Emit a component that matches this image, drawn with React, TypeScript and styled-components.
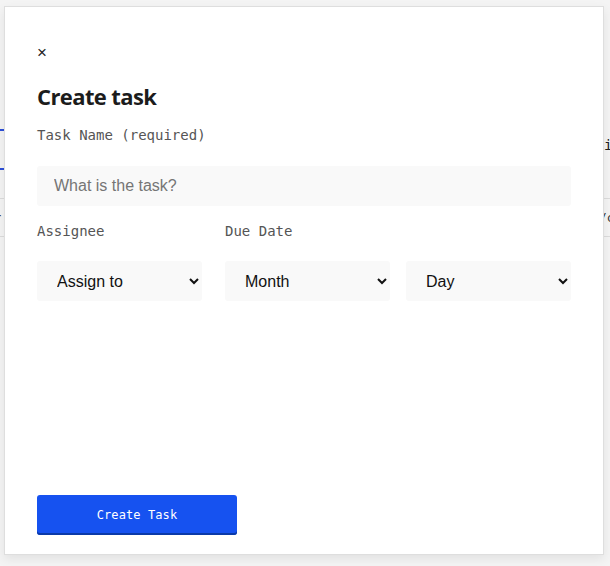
import React from "react";
import styled, { createGlobalStyle } from "styled-components";

const Global = createGlobalStyle`
  html, body { margin: 0; padding: 0; }
  body {
    width: 610px;
    height: 566px;
    overflow: hidden;
    background: #f2f2f2;
    font-family: "Liberation Sans", Arial, sans-serif;
  }
`;

const Page = styled.div`
  position: relative;
  width: 610px;
  height: 566px;
  background: #f4f4f4;
  overflow: hidden;
`;

const BgContent = styled.div`
  padding-top: 129px;
  display: flex;
  flex-direction: column;
`;

const BgTabRow = styled.div`
  height: 37px;
  border-top: 2px solid #2d4fd8;
  border-bottom: 2px solid #2d4fd8;
  width: 4px;
`;

const BgRow = styled.div<{ $h: number }>`
  height: ${(p) => p.$h}px;
  border-bottom: 1px solid #dcdcdc;
  display: flex;
  align-items: center;
  justify-content: space-between;
  font-family: "DejaVu Sans Mono", monospace;
  font-size: 12px;
  color: #333;
`;

const BgText = styled.span<{ $right?: boolean }>`
  margin-left: ${(p) => (p.$right ? "0" : "-6px")};
  margin-right: ${(p) => (p.$right ? "-4px" : "0")};
`;

const BgSideI = styled.span`
  position: absolute;
  left: 604px;
  top: 137px;
  font-family: "DejaVu Sans Mono", monospace;
  font-size: 14px;
  color: #222;
`;

const Modal = styled.div`
  position: absolute;
  left: 4px;
  top: 6px;
  width: 600px;
  height: 549px;
  box-sizing: border-box;
  background: #fff;
  border: 1px solid #dedede;
  box-shadow: 0 4px 10px rgba(0, 0, 0, 0.08);
  padding: 36px 32px 19px 32px;
  display: flex;
  flex-direction: column;
`;

const CloseButton = styled.button`
  align-self: flex-start;
  background: none;
  border: none;
  padding: 0;
  margin: 0;
  font-family: "Liberation Sans", Arial, sans-serif;
  font-size: 17px;
  line-height: 20px;
  color: #222;
  cursor: pointer;
`;

const Title = styled.h1`
  margin: 18px 0 0 0;
  font-family: "Open Sans", "Noto Sans", sans-serif;
  font-weight: 700;
  font-size: 22px;
  line-height: 30px;
  letter-spacing: -0.6px;
  color: #1c1c1c;
`;

const Label = styled.label`
  display: block;
  font-family: "DejaVu Sans Mono", monospace;
  font-size: 14px;
  line-height: 18px;
  color: #555;
`;

const Field = styled.div<{ $top: number; $gap: number }>`
  margin-top: ${(p) => p.$top}px;
  display: flex;
  flex-direction: column;
  gap: ${(p) => p.$gap}px;
`;

const TextInput = styled.input`
  height: 40px;
  box-sizing: border-box;
  border: none;
  border-radius: 3px;
  background: #f9f9f9;
  padding: 0 17px;
  font-family: "Liberation Sans", Arial, sans-serif;
  font-size: 16px;
  color: #222;
  outline: none;
  &::placeholder {
    color: #757575;
  }
`;

const Columns = styled.div`
  margin-top: 16px;
  display: grid;
  grid-template-columns: 165px 1fr;
  column-gap: 23px;
`;

const Selects = styled.div`
  display: flex;
  gap: 16px;
`;

const Select = styled.select`
  width: 165px;
  height: 40px;
  box-sizing: border-box;
  border: none;
  border-radius: 3px;
  background: #f9f9f9;
  padding: 0 4px 0 16px;
  font-family: "Liberation Sans", Arial, sans-serif;
  font-size: 16px;
  color: #111;
  outline: none;
`;

const Spacer = styled.div`
  flex: 1;
`;

const SubmitButton = styled.button`
  align-self: flex-start;
  width: 200px;
  height: 40px;
  box-sizing: border-box;
  border: none;
  border-radius: 3px;
  background: #1652f0;
  box-shadow: inset 0 -2px 0 #0b3aa8;
  color: #fff;
  font-family: "DejaVu Sans Mono", monospace;
  font-size: 12px;
  letter-spacing: 0.1px;
  cursor: pointer;
`;

export default function App() {
  return (
    <Page>
      <Global />
      <BgContent>
        <BgTabRow />
        <BgRow $h={28} />
        <BgRow $h={37}>
          <BgText>r</BgText>
          <BgText $right>/c</BgText>
        </BgRow>
      </BgContent>
      <BgSideI>i</BgSideI>
      <Modal>
        <CloseButton aria-label="Close">×</CloseButton>
        <Title>Create task</Title>
        <Field $top={15} $gap={22}>
          <Label>Task Name (required)</Label>
          <TextInput placeholder="What is the task?" />
        </Field>
        <Columns>
          <Field $top={0} $gap={21}>
            <Label>Assignee</Label>
            <Select defaultValue="">
              <option value="">Assign to</option>
            </Select>
          </Field>
          <Field $top={0} $gap={21}>
            <Label>Due Date</Label>
            <Selects>
              <Select defaultValue="">
                <option value="">Month</option>
              </Select>
              <Select defaultValue="">
                <option value="">Day</option>
              </Select>
            </Selects>
          </Field>
        </Columns>
        <Spacer />
        <SubmitButton>Create Task</SubmitButton>
      </Modal>
    </Page>
  );
}
